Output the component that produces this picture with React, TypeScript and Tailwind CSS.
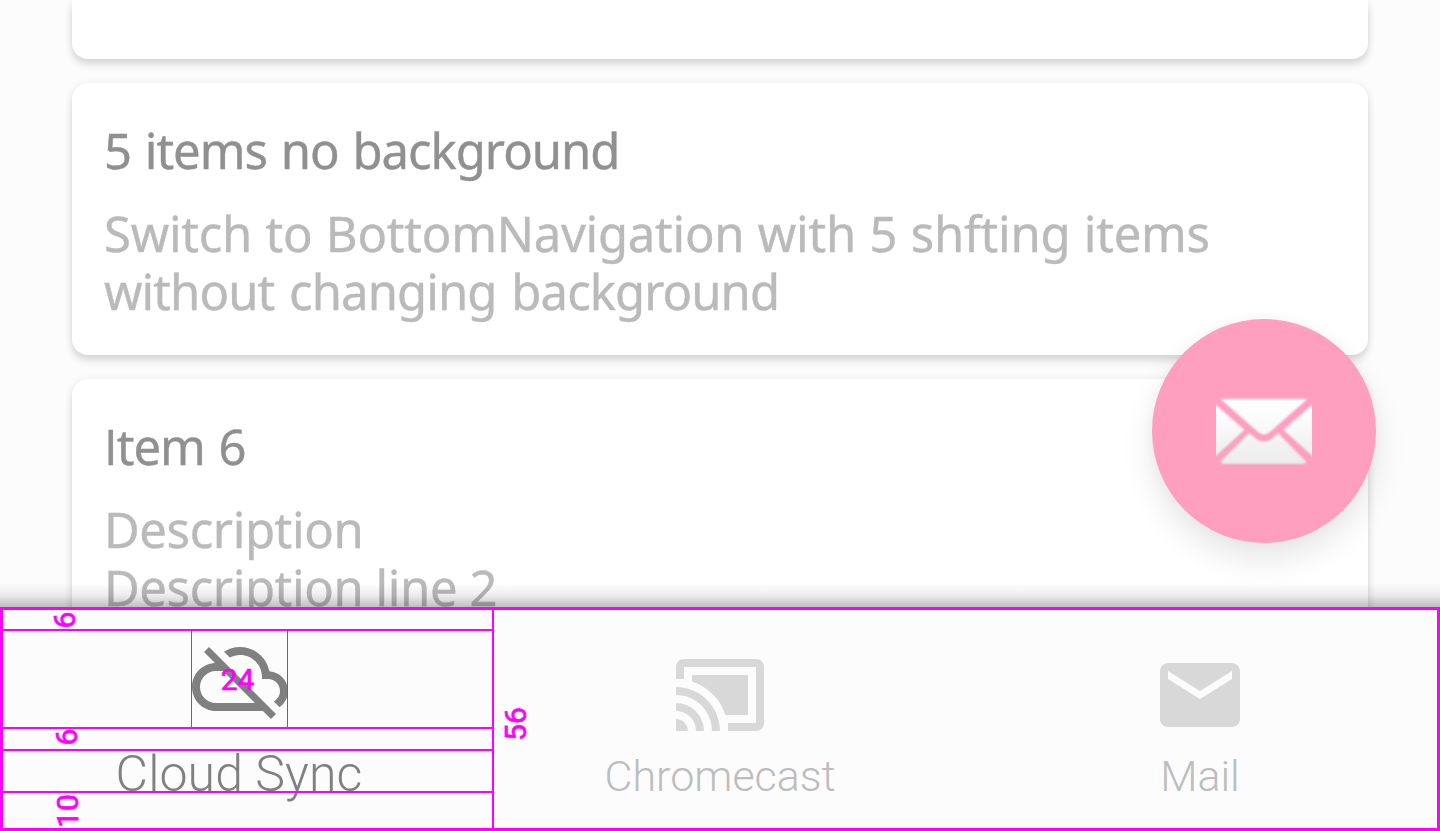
import React, { type ReactNode } from "react";

type CardProps = { title: ReactNode; children: ReactNode };

function Card({ title, children }: CardProps) {
  return (
    <section className="h-[272px] shrink-0 rounded-[16px] bg-white px-8 pt-8 shadow-[0_6px_8px_rgba(0,0,0,0.13),0_0_8px_rgba(0,0,0,0.06)] [-webkit-text-stroke:0.4px_currentColor]">
      <h2 className="h-[70px] text-[49px] leading-[70px] tracking-[-1px] text-[#909090] [word-spacing:2px]">
        {title}
      </h2>
      <div className="pt-[19px] text-[49px] leading-[58px] whitespace-nowrap text-[#bababa]">{children}</div>
    </section>
  );
}

const icons = {
  cloudOff:
    "M19.35 10.04C18.67 6.59 15.64 4 12 4c-1.48 0-2.85.43-4.01 1.17l1.46 1.46C10.21 6.23 11.08 6 12 6c3.04 0 5.5 2.46 5.5 5.5v.5H19c1.66 0 3 1.34 3 3 0 1.13-.64 2.11-1.56 2.62l1.45 1.45C23.16 18.16 24 16.68 24 15c0-2.64-2.05-4.78-4.65-4.96zM3 5.27l2.75 2.74C2.56 8.15 0 10.77 0 14c0 3.31 2.69 6 6 6h11.73l2 2L21 20.73 4.27 4 3 5.27zM7.73 10l8 8H6c-2.21 0-4-1.79-4-4s1.79-4 4-4h1.73z",
  cast: "M1 18v3h3c0-1.66-1.34-3-3-3zm0-4v2c2.76 0 5 2.24 5 5h2c0-3.87-3.13-7-7-7zm18-7H5v1.63c3.96 1.28 7.09 4.41 8.37 8.37H19V7zM1 10v2c4.97 0 9 4.03 9 9h2c0-6.08-4.93-11-11-11zm20-7H3c-1.1 0-2 .9-2 2v3h2V5h18v14h-7v2h7c1.1 0 2-.9 2-2V5c0-1.1-.9-2-2-2z",
  mail: "M20 4H4c-1.1 0-1.99.9-1.99 2L2 18c0 1.1.9 2 2 2h16c1.1 0 2-.9 2-2V6c0-1.1-.9-2-2-2zm0 4l-8 5-8-5V6l8 5 8-5v2z",
};

function NavIcon({ path, className }: { path: string; className: string }) {
  return (
    <svg viewBox="0 0 24 24" className={"size-24 shrink-0 fill-current " + className}>
      <path d={path} />
    </svg>
  );
}

function Dimension({ value, className }: { value: string; className: string }) {
  return (
    <span className={"w-10 text-center text-[30px] leading-8 [-webkit-text-stroke:0.7px_currentColor] " + className}>
      {value}
    </span>
  );
}

function Keylines() {
  return (
    <div className="pointer-events-none absolute inset-0 flex border-[3px] border-[#ff00ff] text-[#ff00ff]">
      <div className="flex w-[491px] flex-col border-r-2 border-[#ff00ff]">
        <div className="flex h-[21px] items-center border-b-2 border-[#ff00ff] pl-[42px]">
          <Dimension value="6" className="-rotate-90" />
        </div>
        <div className="flex h-[98px] border-b-2 border-[#ff00ff] pl-[188px]">
          <div className="flex w-[97px] items-center justify-center border-x border-[#ff00ff] pt-[2px] pr-1">
            <Dimension value="24" className="" />
          </div>
        </div>
        <div className="flex h-[22px] items-center border-b-2 border-[#ff00ff] pb-1 pl-[44px]">
          <Dimension value="6" className="-rotate-90" />
        </div>
        <div className="h-[42px] border-b-2 border-[#ff00ff]" />
        <div className="flex flex-1 items-center pl-[45px]">
          <Dimension value="10" className="-rotate-90" />
        </div>
      </div>
      <div className="flex items-center pt-[10px] pl-[2px]">
        <Dimension value="56" className="-rotate-90" />
      </div>
    </div>
  );
}

export default function App() {
  return (
    <div className="relative flex h-[831px] w-[1440px] flex-col overflow-hidden bg-[#fcfcfc] font-['Noto_Sans',sans-serif]">
      <main className="flex h-[607px] shrink-0 flex-col gap-6 overflow-hidden px-[72px]">
        <div className="h-[59px] shrink-0 rounded-b-[16px] bg-white shadow-[0_6px_8px_rgba(0,0,0,0.13),0_0_8px_rgba(0,0,0,0.06)]" />
        <Card title="5 items no background">
          <p className="tracking-[-0.25px] [word-spacing:1px]">Switch to BottomNavigation with 5 shfting items</p>
          <p className="tracking-[-0.92px] [word-spacing:3px]">without changing background</p>
        </Card>
        <Card
          title={
            <>
              <span className="font-['Open_Sans',sans-serif]">I</span>tem 6
            </>
          }
        >
          <p className="tracking-[-0.4px]">Description</p>
          <p className="tracking-[-0.4px]">Description line 2</p>
        </Card>
      </main>

      <div className="absolute top-[583px] left-0 h-6 w-full bg-linear-to-b from-black/0 via-black/7 to-black/25" />

      <button
        aria-label="Compose"
        className="absolute top-[319px] left-[1152px] flex size-[224px] items-center justify-center rounded-full bg-[#ff9fbf] shadow-[0_16px_32px_rgba(0,0,0,0.10),0_0_12px_rgba(0,0,0,0.03)]"
      >
        <svg viewBox="0 0 96 68" className="h-[68px] w-24">
          <defs>
            <linearGradient id="paper" x1="0" y1="0" x2="0" y2="68" gradientUnits="userSpaceOnUse">
              <stop offset="0" stopColor="#ffffff" />
              <stop offset="0.3" stopColor="#fcfcfc" />
              <stop offset="1" stopColor="#ebebeb" />
            </linearGradient>
            <filter id="soft" x="-10%" y="-10%" width="120%" height="120%">
              <feGaussianBlur stdDeviation="0.8" result="paperSoft" />
              <feDropShadow in="paperSoft" dx="0" dy="0.3" stdDeviation="0.8" floodColor="#808080" floodOpacity="0.25" />
            </filter>
          </defs>
          <g fill="url(#paper)" filter="url(#soft)">
            <path d="M4.5 2H91.5L54 35Q48 40.5 42 35Z" />
            <path d="M-4 4.5L28.5 33L-4 62.5Z" />
            <path d="M100 4.5L67.5 33L100 62.5Z" />
            <path d="M4 65L33 36L38 40Q48 49 58 40L62 36L90.5 65Q89 67 87 67H8Q5.500 67 4 65Z" />
          </g>
        </svg>
      </button>

      <nav className="relative h-[224px] w-full shrink-0 bg-[#fcfcfc] font-[Roboto,sans-serif]">
        <div className="grid h-full grid-cols-3">
          <div className="flex flex-col items-center pt-6 text-[#808080]">
            <NavIcon path={icons.cloudOff} className="" />
            <span className="pt-[17px] pr-[2px] text-[50px] leading-[60px] font-light tracking-[0.1px]">Cloud Sync</span>
          </div>
          <div className="flex flex-col items-center gap-[6px] pt-10 text-[#bdbdbd]">
            <NavIcon path={icons.cast} className="text-[#d8d8d8]" />
            <span className="text-[43px] leading-[54px] font-light">Chromecast</span>
          </div>
          <div className="flex flex-col items-center gap-[6px] pt-10 text-[#bdbdbd]">
            <NavIcon path={icons.mail} className="text-[#d8d8d8]" />
            <span className="text-[43px] leading-[54px] font-light">Mail</span>
          </div>
        </div>
        <Keylines />
      </nav>
    </div>
  );
}
